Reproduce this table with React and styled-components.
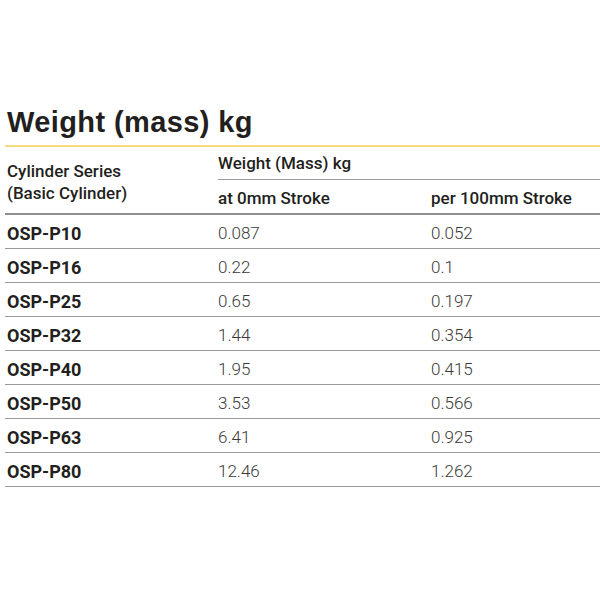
import styled, { createGlobalStyle } from 'styled-components'

const Global = createGlobalStyle`
	body { margin: 0; background: #fff; color: #231f20; font-family: Roboto, "Liberation Sans", sans-serif; }
`

const rows = [
	['OSP-P10', '0.087', '0.052'],
	['OSP-P16', '0.22', '0.1'],
	['OSP-P25', '0.65', '0.197'],
	['OSP-P32', '1.44', '0.354'],
	['OSP-P40', '1.95', '0.415'],
	['OSP-P50', '3.53', '0.566'],
	['OSP-P63', '6.41', '0.925'],
	['OSP-P80', '12.46', '1.262'],
]

const Page = styled.div`padding: 104px 0 0 5px; width: 595px;`,
	Title = styled.h1`margin: 0; padding: 0 0 5px 2px; font: 700 29px/36px "Liberation Sans", Arial, sans-serif; letter-spacing: 0.4px; color: #231f20; border-bottom: 2px solid #f6dc80;`,
	Table = styled.table`width: 595px; border-collapse: collapse; table-layout: fixed;`,
	Col = styled.col`width: ${p => p.$w ? p.$w + 'px' : 'auto'};`,
	Head = styled.th`text-align: left; font: 500 17px/22px Roboto, sans-serif; color: #231f20; padding: 0; vertical-align: middle;
		${p => p.$series && 'vertical-align: top; padding: 13px 0 0 2px;'}
		${p => p.$group && 'height: 32px; border-bottom: 1px solid #9a9a9a;'}
		${p => p.$sub && 'height: 30px; padding-top: 3px;'}`,
	HeadRow = styled.tr`${p => p.$last && 'border-bottom: 2px solid #8f8f8f;'}`,
	Row = styled.tr`border-bottom: 1px solid #9a9a9a;`,
	Label = styled.td`height: 30px; padding: 3px 0 0 2px; font: 700 18px Roboto, sans-serif; color: #231f20;`,
	Num = styled.td`padding: 3px 0 0; font: 300 17px "Liberation Sans Narrow", Roboto, sans-serif; color: #3a3a3a;`

export default function App() {
	return (
		<Page>
			<Global />
			<Title>Weight (mass) kg</Title>
			<Table>
				<colgroup>
					<Col $w={213} />
					<Col $w={213} />
					<Col />
				</colgroup>
				<thead>
					<HeadRow>
						<Head $series rowSpan={2}>Cylinder Series<br />(Basic Cylinder)</Head>
						<Head $group colSpan={2}>Weight (Mass) kg</Head>
					</HeadRow>
					<HeadRow $last>
						<Head $sub>at 0mm Stroke</Head>
						<Head $sub>per 100mm Stroke</Head>
					</HeadRow>
				</thead>
				<tbody>
					{rows.map(r => (
						<Row key={r[0]}>
							<Label>{r[0]}</Label>
							<Num>{r[1]}</Num>
							<Num>{r[2]}</Num>
						</Row>
					))}
				</tbody>
			</Table>
		</Page>
	)
}
